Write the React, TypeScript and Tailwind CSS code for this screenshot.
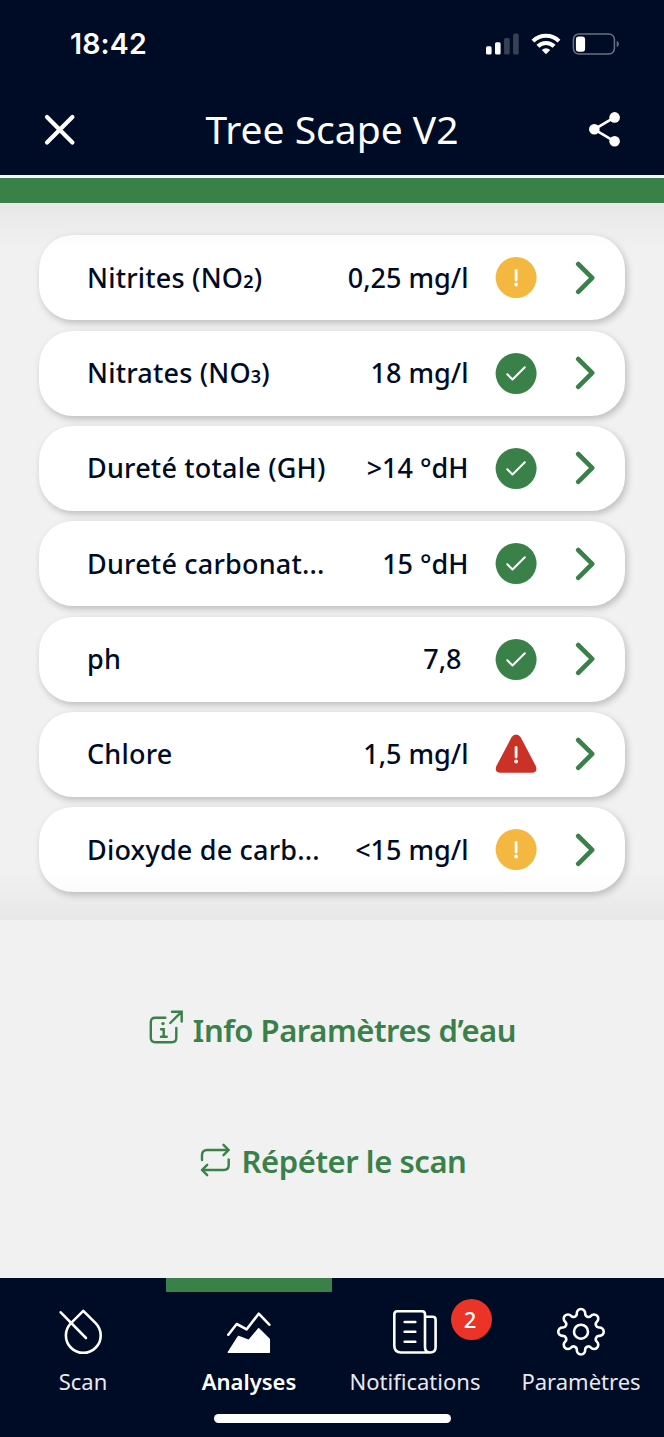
import type { ReactNode } from "react";

type Status = "ok" | "warning" | "danger";

interface Reading {
	label: string;
	subscript?: string;
	value: string;
	unitless?: boolean;
	status: Status;
}

const READINGS: Reading[] = [
	{ label: "Nitrites (NO", subscript: "2", value: "0,25 mg/l", status: "warning" },
	{ label: "Nitrates (NO", subscript: "3", value: "18 mg/l", status: "ok" },
	{ label: "Dureté totale (GH)", value: ">14 °dH", status: "ok" },
	{ label: "Dureté carbonat...", value: "15 °dH", status: "ok" },
	{ label: "ph", value: "7,8", unitless: true, status: "ok" },
	{ label: "Chlore", value: "1,5 mg/l", status: "danger" },
	{ label: "Dioxyde de carb...", value: "<15 mg/l", status: "warning" },
];

function StatusBar() {
	return (
		<div className="flex h-[88px] shrink-0 items-center justify-between pr-[44px] pl-[70px]">
			<span className="font-['Inter',sans-serif] text-[28.5px] leading-none font-semibold tracking-[0.15px]">
				18:42
			</span>
			<div className="flex items-center">
				<svg width="34" height="22" viewBox="0 0 34 22" fill="white">
					<rect x="0" y="13.3" width="5.6" height="8.2" rx="1.5" />
					<rect x="9" y="9.3" width="5.6" height="12.2" rx="1.5" />
					<rect x="18.1" y="5" width="5.6" height="16.5" rx="1.5" opacity=".22" />
					<rect x="27.1" y="0.4" width="5.6" height="21.1" rx="1.5" opacity=".22" />
				</svg>
				<svg className="ml-[11px]" width="30" height="22" viewBox="0 0 30 22">
					<g fill="none" stroke="white" strokeWidth="4.1">
						<path d="M2 8.1a18.5 18.5 0 0 1 26 0" />
						<path d="M6.9 13.3a11.5 11.5 0 0 1 16.2 0" />
					</g>
					<path d="M15 21.2l-4.2-4.3a6 6 0 0 1 8.4 0z" fill="white" />
				</svg>
				<svg className="ml-[11px]" width="48" height="22" viewBox="0 0 48 22">
					<rect
						x="1.4"
						y="0.9"
						width="41"
						height="20.2"
						rx="5.5"
						fill="none"
						stroke="white"
						strokeOpacity=".42"
						strokeWidth="1.5"
					/>
					<rect x="3.9" y="3.5" width="9.2" height="15.3" rx="3" fill="white" />
					<path d="M44.7 7.8q2.2 1 2.2 3.2t-2.2 3.2z" fill="white" opacity=".42" />
				</svg>
			</div>
		</div>
	);
}

function Header() {
	return (
		<div className="flex h-[87px] shrink-0 items-start justify-between px-[43px]">
			<svg className="mt-[25px]" width="34" height="34" viewBox="0 0 34 34">
				<path
					d="M4 4l25.4 25.4M29.4 4L4 29.4"
					stroke="white"
					strokeWidth="4.2"
					strokeLinecap="round"
				/>
			</svg>
			<h1 className="mt-4 text-[39px] leading-[50px]">Tree Scape V2</h1>
			<svg className="mt-[23px]" width="34" height="38" viewBox="0 0 34 38" fill="white">
				<path d="M27.5 6.3L7.3 18.3l20.2 12" fill="none" stroke="white" strokeWidth="2.7" />
				<circle cx="7.3" cy="18.3" r="5.3" />
				<circle cx="27.6" cy="6.4" r="5.3" />
				<circle cx="27.6" cy="30.3" r="5.3" />
			</svg>
		</div>
	);
}

function StatusIcon({ status }: { status: Status }) {
	if (status === "ok") {
		return (
			<svg width="41" height="41" viewBox="0.4 0 41 41" className="overflow-visible">
				<circle cx="20.5" cy="20.5" r="20.5" fill="#3a8049" />
				<path
					d="M11.7 21.3l5.2 5.2L29.2 14.2"
					fill="none"
					stroke="white"
					strokeWidth="2"
					strokeLinecap="round"
					strokeLinejoin="round"
				/>
			</svg>
		);
	}

	return (
		<svg width="41" height="41" viewBox="0.4 0 41 41" className="overflow-visible">
			{status === "warning" ? (
				<circle cx="20.5" cy="20.5" r="20.5" fill="#f4b740" />
			) : (
				<path
					d="M15.9 3.3Q17.7 0.5 20.5 0.5t4.6 2.8L40.2 32q1.6 4.2-.8 6-.9.8-3 .8H4.6q-2.1 0-3-.8-2.4-1.8-.8-6z"
					fill="#cb3126"
				/>
			)}
			<path d="M20.5 13.5V23" stroke="white" strokeWidth="2.8" strokeLinecap="round" />
			<circle cx="20.5" cy="27.5" r="1.9" fill="white" />
		</svg>
	);
}

function ReadingRow({ reading }: { reading: Reading }) {
	return (
		<li className="flex h-[85px] items-center rounded-[34px] bg-white pr-[29.5px] pl-12 shadow-[2px_3px_7px_rgba(0,0,0,0.22)]">
			<span className="h-10 flex-1 tracking-[0.2px] whitespace-nowrap">
				{reading.label}
				{reading.subscript && (
					<>
						<span className="text-[18px] leading-none font-semibold">
							{reading.subscript}
						</span>
						)
					</>
				)}
			</span>
			<span className={reading.unitless ? "mr-[34px]" : "mr-[27px]"}>{reading.value}</span>
			<StatusIcon status={reading.status} />
			<svg className="ml-[38px]" width="21" height="34" viewBox="0.3 0 21 34">
				<path
					d="M3.5 3l14 13.8-14 14"
					fill="none"
					stroke="#3a8049"
					strokeWidth="4.6"
					strokeLinecap="round"
					strokeLinejoin="round"
				/>
			</svg>
		</li>
	);
}

function InfoIcon() {
	return (
		<svg
			className="mt-[3px]"
			width="37"
			height="36"
			viewBox="0 0 37 36"
			fill="none"
			stroke="currentColor"
			strokeWidth="2.4"
			strokeLinecap="round"
		>
			<path d="M17.3 8.7h-10q-4.5 0-4.5 4.5v15.500q0 4.5 4.5 4.5h16.500q4.500 0 4.500-4.500V19" />
			<path d="M22.3 14L33.5 2.8M24 2.8h9.7v9.7" />
			<path d="M13 20.3h2.7v7.4M13 27.7h5.7" />
			<circle cx="15" cy="14.6" r="1.7" fill="currentColor" stroke="none" />
		</svg>
	);
}

function RepeatIcon() {
	return (
		<svg
			className="mt-[6px]"
			width="34"
			height="34"
			viewBox="0 0 34 34"
			fill="none"
			stroke="currentColor"
			strokeWidth="2.4"
			strokeLinecap="round"
			strokeLinejoin="round"
		>
			<path d="M4 17v-5q0-5 5-5h21.700M25.500 1.800L30.700 7l-5.200 5.200" />
			<path d="M30.700 16.500V22q0 5-5 5H4M9.200 21.800L4 27l5.200 5.200" />
		</svg>
	);
}

function ScanIcon() {
	return (
		<>
			<path d="M24.3 2.8l12.3 12.3a17.4 17.4 0 1 1-24.6 0z" />
			<path d="M1.7 4.3L27 30" />
		</>
	);
}

function ChartIcon() {
	return (
		<>
			<path d="M3.3 26.7L11.7 16l10 5.3L33.7 5.7l10.6 11" />
			<path
				d="M3.3 44.3l10.2-15.8 10.3 4 9.9-11.8 10.6 10.5v13.1z"
				fill="white"
				strokeWidth="1.5"
			/>
		</>
	);
}

function NewsIcon() {
	return (
		<>
			<path d="M39.3 44.5H10q-6.7 0-6.7-6.7V6.3q0-3 3-3H31q3 0 3 3v33q0 5.2 5.3 5.2t5.3-5.2V11.7q0-3-3-3H34" />
			<path d="M13.7 14h10.6M13.7 23.7h10.6M13.7 33.7h10.6" />
		</>
	);
}

// Outline of the cog: eight rounded teeth joined by concave valleys.
const COG_PATH = Array.from({ length: 8 }, (_, i) => {
	const angle = (i * Math.PI) / 4;
	const cos = Math.cos(angle);
	const sin = Math.sin(angle);
	const point = (x: number, y: number) =>
		`${(24 + x * cos - y * sin).toFixed(2)} ${(23.7 + x * sin + y * cos).toFixed(2)}`;
	const start = i === 0 ? "M" : "A3.28 3.28 0 0 0 ";
	return `${start}${point(18.24, -4.19)}A4.2 4.2 0 1 1 ${point(18.24, 4.19)}`;
}).join("");

function CogIcon() {
	return (
		<>
			<path d={`${COG_PATH}A3.28 3.28 0 0 0 42.24 19.51Z`} />
			<circle cx="24" cy="23.7" r="7" />
		</>
	);
}

interface TabProps {
	label: string;
	active?: boolean;
	badge?: number;
	children: ReactNode;
}

function Tab({ label, active, badge, children }: TabProps) {
	return (
		<div className="relative flex w-[166px] flex-col items-center">
			<div className={active ? "h-[14px] w-full bg-[#3a8049]" : "h-[14px] w-full"} />
			<svg
				className="mt-4 overflow-visible"
				width="48"
				height="48"
				viewBox="0 0 48 48"
				fill="none"
				stroke="white"
				strokeWidth="2.6"
				strokeLinecap="round"
				strokeLinejoin="round"
			>
				{children}
			</svg>
			<span
				className={
					active
						? "mt-[10px] text-[22px] leading-[30px] font-semibold"
						: "mt-[10px] text-[22px] leading-[30px] text-[#e8e9ec]"
				}
			>
				{label}
			</span>
			{badge && (
				<span className="absolute top-[21px] left-[118.5px] flex size-[41px] items-center justify-center rounded-full bg-[#eb3427] pr-[2px] pb-[2px] text-[22px] leading-none font-medium">
					{badge}
				</span>
			)}
		</div>
	);
}

export default function App() {
	return (
		<div className="flex h-[1437px] w-[664px] flex-col overflow-hidden bg-[#f1f1f1] font-['Noto_Sans',sans-serif] text-white">
			<header className="flex flex-col bg-[#000b25]">
				<StatusBar />
				<Header />
			</header>
			<div className="h-[28px] shrink-0 border-t-[3px] border-[#f4f5f6] bg-[#3a8049]" />

			<section className="relative h-[717px] shrink-0 px-[39px] pt-[32.3px]">
				<ul className="flex flex-col gap-[10.33px] text-[27px] leading-10 font-medium text-[#000b25]">
					{READINGS.map((reading) => (
						<ReadingRow key={reading.label} reading={reading} />
					))}
				</ul>
				<div className="pointer-events-none absolute inset-x-0 top-0 h-[48px] bg-linear-to-b from-black/4 to-transparent" />
				<div className="pointer-events-none absolute inset-x-0 bottom-0 h-[48px] bg-linear-to-t from-black/4 to-transparent" />
			</section>

			<div className="flex flex-1 flex-col items-center pt-[86px] text-[31px] leading-[48px] font-semibold tracking-[-0.45px] text-[#3a8049]">
				<div className="flex h-12 items-start">
					<InfoIcon />
					<span className="ml-[8px]">Info Paramètres d’eau</span>
				</div>
				<div className="mt-[83px] flex h-12 items-start">
					<RepeatIcon />
					<span className="ml-[10px]">Répéter le scan</span>
				</div>
			</div>

			<nav className="flex h-[159px] shrink-0 flex-col items-center bg-[#000b25]">
				<div className="flex">
					<Tab label="Scan">
						<ScanIcon />
					</Tab>
					<Tab label="Analyses" active>
						<ChartIcon />
					</Tab>
					<Tab label="Notifications" badge={2}>
						<NewsIcon />
					</Tab>
					<Tab label="Paramètres">
						<CogIcon />
					</Tab>
				</div>
				<div className="mt-[18px] h-[9px] w-[237px] rounded-full bg-white" />
			</nav>
		</div>
	);
}
